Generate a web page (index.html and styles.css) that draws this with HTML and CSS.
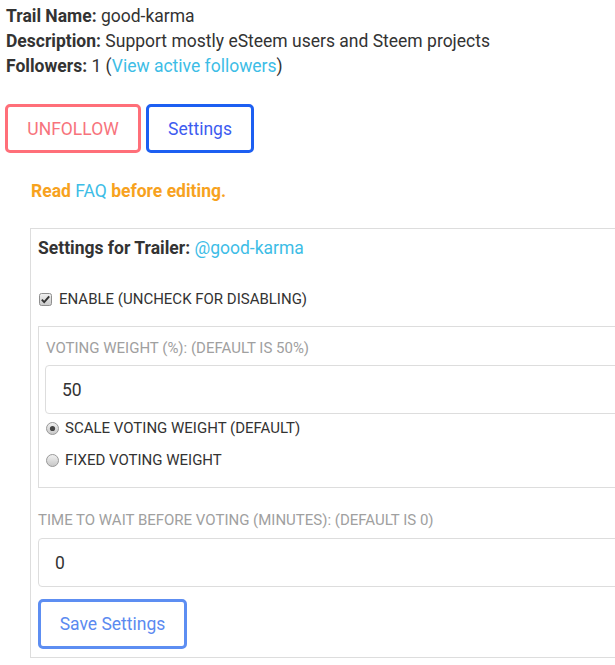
FILE: index.html
```html
<!DOCTYPE html>
<html>
<head>
<meta charset="utf-8">
<link rel="stylesheet" href="styles.css">
</head>
<body>
<div class="page">
  <div class="info">
    <div><b>Trail Name:</b> good-karma</div>
    <div><b>Description:</b> Support mostly eSteem users and Steem projects</div>
    <div><b>Followers:</b> 1 (<a class="link">View active followers</a>)</div>
  </div>
  <div class="actions">
    <button class="btn btn-red">UNFOLLOW</button>
    <button class="btn btn-blue">Settings</button>
  </div>
  <p class="notice">Read <a class="link faq">FAQ</a> before editing.</p>
  <div class="panel">
    <div class="panel-title"><b>Settings for Trailer:</b> <a class="link">@good-karma</a></div>
    <div class="check-row">
      <svg class="box" width="13" height="13" viewBox="0 0 13 13">
        <defs><linearGradient id="g1" x1="0" y1="0" x2="0" y2="1"><stop offset="0" stop-color="#f2f2f2"/><stop offset="1" stop-color="#c9c9c9"/></linearGradient></defs>
        <rect x="0.5" y="0.5" width="12" height="12" rx="2" fill="url(#g1)" stroke="#8f8f8f"/>
        <path d="M2.8 6.6 L5.2 9.1 L10.2 3.4" fill="none" stroke="#333" stroke-width="1.9"/>
      </svg>
      <span class="opt">ENABLE (UNCHECK FOR DISABLING)</span>
    </div>
    <div class="subpanel">
      <div class="label">VOTING WEIGHT (%): (DEFAULT IS 50%)</div>
      <div class="input">50</div>
      <div class="radio-row first">
        <svg class="radio" width="13" height="13" viewBox="0 0 13 13">
          <defs><linearGradient id="g2" x1="0" y1="0" x2="0" y2="1"><stop offset="0" stop-color="#f2f2f2"/><stop offset="1" stop-color="#c6c6c6"/></linearGradient></defs>
          <circle cx="6.5" cy="6.5" r="6" fill="url(#g2)" stroke="#999"/>
          <circle cx="6.5" cy="6.5" r="2.6" fill="#444"/>
        </svg>
        <span class="opt">SCALE VOTING WEIGHT (DEFAULT)</span>
      </div>
      <div class="radio-row">
        <svg class="radio" width="13" height="13" viewBox="0 0 13 13">
          <circle cx="6.5" cy="6.5" r="6" fill="url(#g2)" stroke="#999"/>
        </svg>
        <span class="opt">FIXED VOTING WEIGHT</span>
      </div>
    </div>
    <div class="label label-outer">TIME TO WAIT BEFORE VOTING (MINUTES): (DEFAULT IS 0)</div>
    <div class="input input-outer">0</div>
    <button class="btn btn-save">Save Settings</button>
  </div>
</div>
</body>
</html>
```
FILE: styles.css
```css
html, body {
  margin: 0;
  padding: 0;
  overflow: hidden;
  background: #fff;
}
body {
  font-family: Roboto, "Liberation Sans", Arial, sans-serif;
  font-size: 17.5px;
  color: #333;
}
.page {
  padding: 4px 0 0 6px;
  width: 700px;
}
.info {
  line-height: 25px;
}
.info b {
  font-weight: 700;
}
.link {
  color: #3dbde6;
  text-decoration: none;
}
.actions {
  display: flex;
  gap: 5px;
  margin-top: 25px;
  margin-left: -1px;
}
.btn {
  font-family: inherit;
  font-size: 17.5px;
  background: #fff;
  height: 49px;
  padding: 0 18px;
  border-radius: 5px;
  border: 3px solid;
  cursor: pointer;
}
.btn-red {
  width: 136px;
  border-color: #ff6f79;
  color: #f7737c;
}
.btn-blue {
  width: 108px;
  border-color: #1d5ff2;
  color: #3d5cf0;
}
.notice {
  margin: 26px 0 0 25px;
  line-height: 24px;
  font-weight: 700;
  color: #f7a21e;
}
.notice .faq {
  font-weight: 400;
}
.panel {
  margin: 25px 0 0 24px;
  border: 1px solid #ddd;
  padding: 8px 0 8px 7px;
}
.panel-title {
  line-height: 22px;
}
.check-row {
  display: flex;
  align-items: center;
  margin-top: 28px;
  height: 24px;
  padding-left: 1px;
}
.box {
  margin-right: 7px;
}
.opt {
  font-size: 15px;
  color: #333;
}
.subpanel {
  margin-top: 15px;
  border: 1px solid #ddd;
  padding: 10px 0 11px 7px;
}
.label {
  font-size: 15px;
  color: #a0a0a0;
  line-height: 22px;
}
.input {
  margin-top: 6px;
  height: 47px;
  border: 1px solid #ddd;
  border-radius: 4px;
  display: flex;
  align-items: center;
  padding-left: 16px;
  font-size: 17.5px;
  color: #333;
}
.subpanel .input {
  margin-left: -1px;
}
.radio-row {
  display: flex;
  align-items: center;
  height: 32px;
}
.radio-row.first {
  margin-top: -2px;
}
.radio {
  margin-right: 6px;
}
.label-outer {
  margin-top: 21px;
}
.input-outer {
  margin-top: 7px;
}
.btn-save {
  margin-top: 12px;
  width: 149px;
  height: 50px;
  border-color: #5d8ef2;
  color: #5b8af0;
}
```
